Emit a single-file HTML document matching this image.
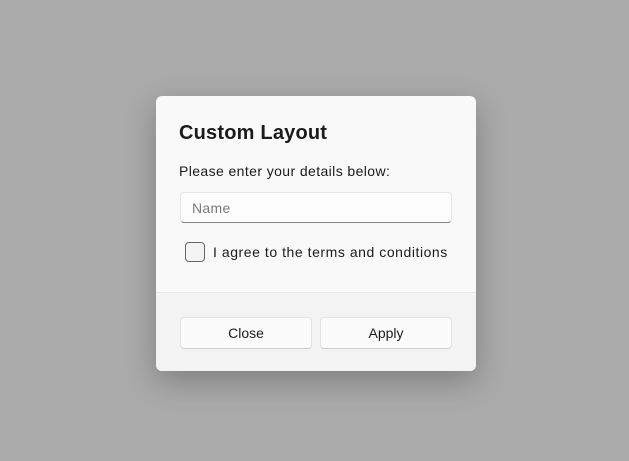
<!DOCTYPE html>
<html><head><style>
body{margin:0;width:629px;height:461px;background:#aaaaaa;font-family:"Liberation Sans",sans-serif;position:relative;overflow:hidden}
.d{position:absolute;left:156px;top:96px;width:320px;height:275px;background:#f9f9f9;border-radius:6px;box-shadow:0 10px 30px rgba(0,0,0,.25);overflow:hidden}
.t{position:absolute;left:23px;top:26px;font-size:20px;font-weight:bold;color:#1b1b1b;letter-spacing:0.2px}
.p{position:absolute;left:23px;top:67px;font-size:14px;color:#1b1b1b;letter-spacing:0.4px}
.i{position:absolute;left:24px;top:96px;width:272px;height:31px;background:#fdfdfd;border:1px solid #e6e6e6;border-bottom:1px solid #868686;border-radius:4px;box-sizing:border-box;font-size:14px;color:#7a7a7a;padding:7px 11px;letter-spacing:0.3px}
.c{position:absolute;left:29px;top:146px;width:20px;height:20px;border:1px solid #666;border-radius:4px;box-sizing:border-box;background:#f4f4f4}
.l{position:absolute;left:57px;top:148px;font-size:14px;color:#1b1b1b;letter-spacing:0.55px}
.f{position:absolute;left:0;top:196px;width:320px;height:79px;background:#f3f3f3;border-top:1px solid #e8e8e8}
.b{position:absolute;top:24px;width:132px;height:32px;background:#fbfbfb;border:1px solid #e3e3e3;border-bottom-color:#cfcfcf;border-radius:4px;box-sizing:border-box;font-size:14px;color:#1b1b1b;text-align:center;line-height:30px}
</style></head><body>
<div class="d">
<div class="t">Custom Layout</div>
<div class="p">Please enter your details below:</div>
<div class="i">Name</div>
<div class="c"></div>
<div class="l">I agree to the terms and conditions</div>
<div class="f">
<div class="b" style="left:24px">Close</div>
<div class="b" style="left:164px">Apply</div>
</div>
</div>
</body></html>
